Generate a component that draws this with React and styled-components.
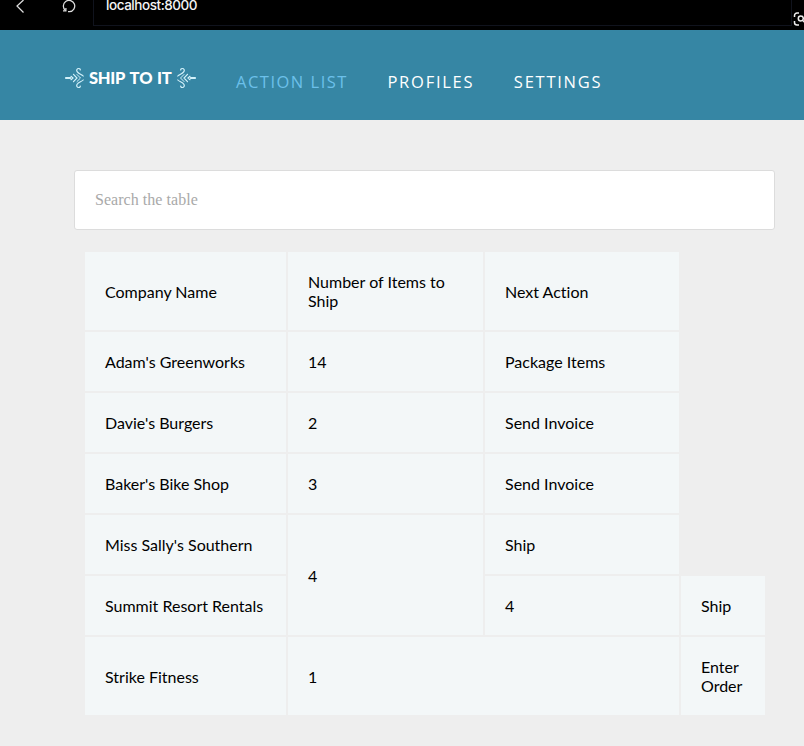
import React from "react";
import styled, { createGlobalStyle } from "styled-components";

const GlobalStyle = createGlobalStyle`
  *, *::before, *::after { box-sizing: border-box; }
  body { margin: 0; background: #eeeeee; overflow: hidden; }
`;

const Page = styled.div`
  height: 746px;
  background: #eeeeee;
  font-family: Lato, sans-serif;
  font-size: 16px;
  font-variant-ligatures: none;
  color: #000;
`;

const BrowserBar = styled.div`
  position: relative;
  display: flex;
  height: 30px;
  background: #000;
`;

const BrowserControls = styled.div`
  width: 93px;
  flex: none;
  svg { display: block; }
`;

const AddressField = styled.div`
  width: 699px;
  height: 26px;
  padding-left: 12px;
  border: 1px solid #10131d;
  border-top: 0;
  font: 500 13.5px/11px Inter, sans-serif;
  letter-spacing: -0.45px;
  color: #f4f4f4;
`;

const LensIcon = styled.svg`
  position: absolute;
  left: 792px;
  top: 11px;
`;

const Header = styled.header`
  display: flex;
  height: 90px;
  background: #3686a4;
`;

const Logo = styled.div`
  display: flex;
  align-items: center;
  width: 132px;
  height: 24px;
  margin: 36px 0 0 65px;
  color: #fff;
`;

const LogoName = styled.span`
  width: 91px;
  padding-left: 4px;
  white-space: nowrap;
  font-weight: 900;
  font-size: 16.5px;
  line-height: 24px;
  letter-spacing: -0.3px;
  word-spacing: 1px;
  font-kerning: none;
`;

const Flourish = styled.svg`
  flex: none;
  transform: ${(p) => (p.$flip ? "scaleX(-1)" : "none")};
`;

const Nav = styled.nav`
  display: flex;
  gap: 39.5px;
  margin: 40px 0 0 39px;
`;

const NavLink = styled.a`
  font: 400 16.5px/24px "Open Sans", sans-serif;
  letter-spacing: ${(p) => p.$spacing}px;
  text-transform: uppercase;
  color: ${(p) => (p.$active ? "#6cc0ea" : "#fff")};
`;

const Content = styled.main`
  padding: 50px 29px 0 74px;
`;

const SearchInput = styled.input`
  display: block;
  width: 701px;
  height: 60px;
  padding: 0 20px;
  border: 1px solid #dcdcdc;
  border-radius: 3px;
  background: #fff;
  font: 16px "Liberation Serif", serif;
  letter-spacing: 0.04px;
  outline: none;
  &::placeholder { color: #a9a9a9; opacity: 1; }
`;

const Table = styled.table`
  width: 684px;
  margin: 20px 0 0 9px;
  table-layout: fixed;
  border-collapse: separate;
  border-spacing: 2px;
  line-height: 19px;
`;

const Column = styled.col`
  width: ${(p) => p.$width}px;
`;

const Row = styled.tr`
  height: ${(p) => (p.$tall ? 78 : 59)}px;
`;

const Cell = styled.td`
  padding: 20px;
  background: #f3f7f8;
  vertical-align: middle;
`;

const links = [
  { label: "Action List", active: true, spacing: 1.5 },
  { label: "Profiles", spacing: 1.75 },
  { label: "Settings", spacing: 1.75 },
];

const rows = [
  { tall: true, cells: ["Company Name", "Number of Items to Ship", "Next Action"] },
  { cells: ["Adam's Greenworks", "14", "Package Items"] },
  { cells: ["Davie's Burgers", "2", "Send Invoice"] },
  { cells: ["Baker's Bike Shop", "3", "Send Invoice"] },
  { cells: ["Miss Sally's Southern", { text: "4", rowSpan: 2 }, "Ship"] },
  { cells: ["Summit Resort Rentals", "4", "Ship"] },
  { tall: true, cells: ["Strike Fitness", { text: "1", colSpan: 2 }, "Enter Order"] },
];

function LogoFlourish({ flip }) {
  return (
    <Flourish $flip={flip} width="20" height="24" viewBox="0 0 20 24" fill="none" stroke="#d3f1fa" strokeLinecap="round">
      <path d="M.8 12h4.500" strokeWidth="1.8" />
      <path d="M6 10.300l2 1.700-2 1.700M8.500 8.300l3.500 3.700-3.500 3.700" strokeWidth="1.200" />
      <path d="M15.300 4c.2-1.800-2.600-2-3.400-.4-1.700 3.500 4.800 4.500 6.300 6.400M15.300 20c.2 1.800-2.600 2-3.400.4-1.700-3.500 4.800-4.500 6.300-6.400" strokeWidth="1.200" />
      <path d="M12 8.500l3.500 3.500-3.500 3.500" strokeWidth="1" />
    </Flourish>
  );
}

export default function App() {
  return (
    <Page>
      <GlobalStyle />
      <BrowserBar>
        <BrowserControls>
          <svg width="93" height="30" fill="none" stroke="#dedede" strokeWidth="1.25">
            <path d="M23.500 0L17 6l6.500 6.500" />
            <path d="M65.500 10.500A5.700 5.700 0 1 1 69.500 11.700H68" />
            <path d="M63 10.900h2.900V8" />
          </svg>
        </BrowserControls>
        <AddressField>localhost:8000</AddressField>
        <LensIcon width="12" height="16" fill="none" stroke="#eee" strokeWidth="1.5">
          <path d="M7 2H5a2.500 2.500 0 0 0-2.500 2.500V6M2.500 10v1.500A2.500 2.500 0 0 0 5 14h2" />
          <circle cx="8.800" cy="7.500" r="2.500" />
          <path d="M10.500 9.300l2 2" />
        </LensIcon>
      </BrowserBar>
      <Header>
        <Logo>
          <LogoFlourish />
          <LogoName>SHIP TO IT</LogoName>
          <LogoFlourish flip />
        </Logo>
        <Nav>
          {links.map((l) => (
            <NavLink key={l.label} $active={l.active} $spacing={l.spacing}>{l.label}</NavLink>
          ))}
        </Nav>
      </Header>
      <Content>
        <SearchInput placeholder="Search the table" />
        <Table>
          <colgroup>
            <Column $width={201} />
            <Column $width={195} />
            <Column $width={194} />
            <Column $width={84} />
          </colgroup>
          <tbody>
            {rows.map((row, i) => (
              <Row key={i} $tall={row.tall}>
                {row.cells.map((cell, j) => (
                  <Cell key={j} rowSpan={cell.rowSpan} colSpan={cell.colSpan}>{cell.text ?? cell}</Cell>
                ))}
              </Row>
            ))}
          </tbody>
        </Table>
      </Content>
    </Page>
  );
}
